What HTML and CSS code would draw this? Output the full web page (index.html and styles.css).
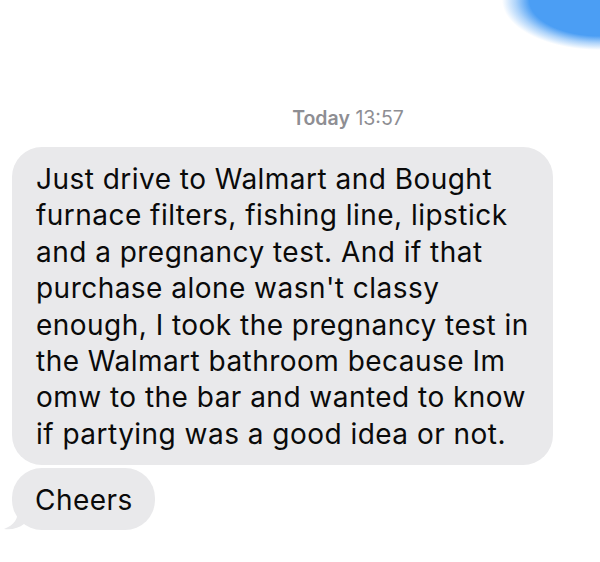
FILE: index.html
```html
<!DOCTYPE html>
<html lang="en">
<head>
  <meta charset="UTF-8">
  <meta name="viewport" content="width=device-width, initial-scale=1.0">
  <title>Messages</title>
  <link rel="stylesheet" href="styles.css">
</head>
<body>
  <div class="sent-blur"></div>

  <div class="thread">
    <div class="stamp"><strong>Today</strong> 13:57</div>

    <div class="bubble">
      Just drive to Walmart and Bought<br>
      furnace filters, fishing line, lipstick<br>
      and a pregnancy test. And if that<br>
      purchase alone wasn't classy<br>
      enough, I took the pregnancy test in<br>
      the Walmart bathroom because Im<br>
      omw to the bar and wanted to know<br>
      if partying was a good idea or not.
    </div>

    <div class="bubble last">
      Cheers
      <svg class="tail" width="22" height="20" viewBox="0 0 22 20">
        <path d="M14 0 C14 8 11 15 0 19 C8 20 15 18 20 14 L20 0 Z" fill="#e9e9eb"/>
      </svg>
    </div>
  </div>
</body>
</html>
```

FILE: styles.css
```css
* { margin: 0; padding: 0; box-sizing: border-box; }
body {
  font-family: Inter, 'Liberation Sans', Arial, sans-serif;
  background: #ffffff;
  width: 600px;
  height: 562px;
  overflow: hidden;
  position: relative;
}
/* blurred corner of a sent message above */
.sent-blur {
  position: absolute;
  top: 0;
  right: 0;
  width: 98px;
  height: 50px;
  background: radial-gradient(ellipse 100% 100% at 100% 0, #4b9ef4 72%, rgba(75, 158, 244, 0.45) 86%, rgba(75, 158, 244, 0) 100%);
}
.thread {
  display: flex;
  flex-direction: column;
  align-items: flex-start;
  padding: 105px 0 0 12px;
}
.stamp {
  align-self: stretch;
  text-align: center;
  padding-left: 84px;
  font-size: 19.5px;
  color: #8e8e93;
  line-height: 26px;
  margin-bottom: 16px;
}
.stamp strong { font-weight: 600; }
.bubble {
  position: relative;
  background: #e9e9eb;
  color: #0a0a0a;
  font-size: 28px;
  line-height: 36.4px;
  letter-spacing: 0.47px;
  padding: 14px 16px 13px 24px;
  border-radius: 30px;
  width: 541px;
}
.bubble.last {
  width: auto;
  margin-top: 3px;
  padding: 14px 22px 11px 23px;
}
.tail {
  position: absolute;
  left: -8px;
  bottom: 0;
}
```
